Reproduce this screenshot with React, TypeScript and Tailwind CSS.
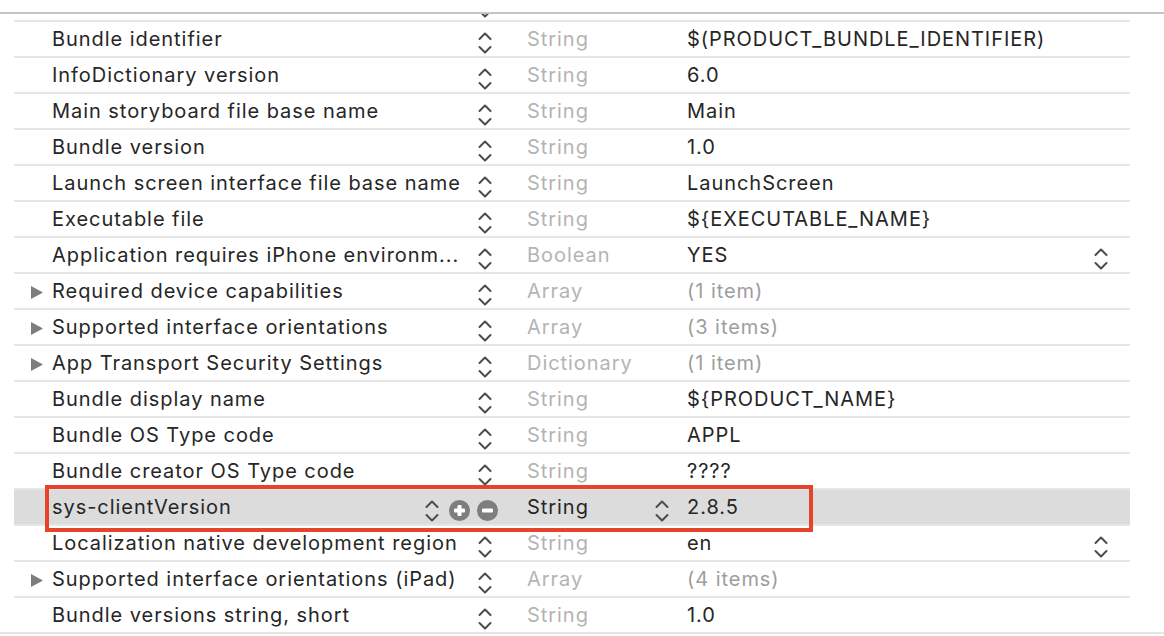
import React from 'react';
import clsx from 'clsx';

type Row = {
	key: string;
	type: string;
	value: string;
	folder?: boolean;
	popup?: boolean;
	muted?: boolean;
	selected?: boolean;
};

const rows: Row[] = [
	// row scrolled up under the header, only its stepper tip shows
	{ key: '', type: '', value: '' },
	{ key: 'Bundle identifier', type: 'String', value: '$(PRODUCT_BUNDLE_IDENTIFIER)' },
	{ key: 'InfoDictionary version', type: 'String', value: '6.0' },
	{ key: 'Main storyboard file base name', type: 'String', value: 'Main' },
	{ key: 'Bundle version', type: 'String', value: '1.0' },
	{ key: 'Launch screen interface file base name', type: 'String', value: 'LaunchScreen' },
	{ key: 'Executable file', type: 'String', value: '${EXECUTABLE_NAME}' },
	{ key: 'Application requires iPhone environm...', type: 'Boolean', value: 'YES', popup: true },
	{ key: 'Required device capabilities', type: 'Array', value: '(1 item)', folder: true, muted: true },
	{ key: 'Supported interface orientations', type: 'Array', value: '(3 items)', folder: true, muted: true },
	{ key: 'App Transport Security Settings', type: 'Dictionary', value: '(1 item)', folder: true, muted: true },
	{ key: 'Bundle display name', type: 'String', value: '${PRODUCT_NAME}' },
	{ key: 'Bundle OS Type code', type: 'String', value: 'APPL' },
	{ key: 'Bundle creator OS Type code', type: 'String', value: '????' },
	{ key: 'sys-clientVersion', type: 'String', value: '2.8.5', selected: true },
	{ key: 'Localization native development region', type: 'String', value: 'en', popup: true },
	{ key: 'Supported interface orientations (iPad)', type: 'Array', value: '(4 items)', folder: true, muted: true },
	{ key: 'Bundle versions string, short', type: 'String', value: '1.0' },
];

function Stepper({ className }: { className?: string }) {
	return (
		<svg width="14" height="22" viewBox="0 0 14 22" className={clsx('mt-[8px] shrink-0', className)}>
			<g fill="none" stroke="#4b4b4b" strokeWidth="2" strokeLinecap="round" strokeLinejoin="round">
				<polyline points="1.5,7 7,1.5 12.5,7" />
				<polyline points="1.5,15 7,20.5 12.5,15" />
			</g>
		</svg>
	);
}

function RoundButton({ minus }: { minus?: boolean }) {
	return (
		<svg width="21" height="21" viewBox="0 0 21 21" className="mt-[6px] shrink-0">
			<circle cx="10.5" cy="10.5" r="10.5" fill="#7e7e7e" />
			<rect x="5" y="8.5" width="11" height="4" rx="1" fill="#fff" />
			{!minus && <rect x="8.5" y="5" width="4" height="11" rx="1" fill="#fff" />}
		</svg>
	);
}

function PlistRow({ row }: { row: Row }) {
	return (
		<div
			className={clsx(
				'flex h-[36px] items-center border-b-2 border-[#e6e6e6]',
				row.selected && 'bg-[#dcdcdc]',
			)}
		>
			{/* disclosure */}
			<div className="flex w-[38px] pl-[17px]">
				{row.folder && (
					<svg width="12" height="13" viewBox="0 0 12 13" className="mt-[3px]">
						<polygon points="0,0 12,6.5 0,13" fill="#7d7d7d" />
					</svg>
				)}
			</div>

			{/* key */}
			<div className="w-[372px] whitespace-nowrap text-[#262626]">{row.key}</div>

			{/* key controls */}
			<div className="flex w-[81px] items-center">
				{row.selected ? (
					<>
						<Stepper className="ml-[1px]" />
						<div className="ml-[10px] flex gap-[7px]">
							<RoundButton />
							<RoundButton minus />
						</div>
					</>
				) : (
					<Stepper className="ml-[54px]" />
				)}
			</div>

			{/* type */}
			<div className="flex w-[182px] items-center justify-between pl-[22px] pr-[18px]">
				<span className={row.selected ? 'text-[#262626]' : 'text-[#b4b4b4]'}>{row.type}</span>
				{row.selected && <Stepper />}
			</div>

			{/* value */}
			<div className="flex flex-1 items-center justify-between pr-[22px]">
				<span className={clsx('whitespace-nowrap', row.muted ? 'text-[#9d9d9d]' : 'text-[#262626]')}>
					{row.value}
				</span>
				{row.popup && <Stepper />}
			</div>
		</div>
	);
}

export default function App() {
	return (
		<div className="relative flex h-[636px] w-[1164px] flex-col overflow-hidden bg-white font-['Inter','Noto_Sans',sans-serif] text-[20px] leading-none tracking-[0.95px]">
			{/* header edge over the scrolled list */}
			<div className="relative z-10 h-[14px] shrink-0 border-b-2 border-[#c4c4c4] bg-white" />

			<div className="h-[618px] shrink-0 overflow-hidden">
				<div className="-mt-[28px] ml-[14px] w-[1116px]">
					{rows.map((row, index) => (
						<PlistRow key={index} row={row} />
					))}
				</div>
			</div>

			<div className="h-[4px] shrink-0 border-t-2 border-[#e6e6e6]" />

			{/* highlight around the added entry */}
			<div className="pointer-events-none absolute left-[45px] top-[485px] h-[47px] w-[768px] border-4 border-[#e5432a]" />
		</div>
	);
}
